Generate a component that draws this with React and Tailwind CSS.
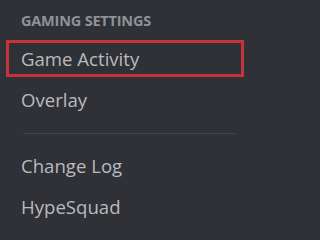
const items = ['Game Activity', 'Overlay']
const more = ['Change Log', 'HypeSquad']

const Item = ({ label, active }) => (
  <div
    className={`h-[37px] mx-[6px] flex items-center pl-[12px] border-[3px] text-[18.6px] text-[#b9bbbe] ${
      active ? 'border-[#c7333d]' : 'border-transparent'
    }`}
  >
    {label}
  </div>
)

export default function App() {
  return (
    <div className="w-full min-h-screen bg-[#2f3136] font-['Open_Sans',sans-serif]">
      <div className="w-[250px] h-[236px] overflow-hidden">
        <div className="pt-[12px] pl-[21px] h-[40px] text-[14.5px] font-bold tracking-[-0.2px] text-[#8e9297] leading-[17px]">
          GAMING SETTINGS
        </div>
        <div className="flex flex-col gap-[4px]">
          {items.map((l, i) => <Item key={l} label={l} active={i === 0} />)}
        </div>
        <div className="mt-[15px] mb-[13px] ml-[23px] mr-[15px] h-px bg-[#42454a]" />
        <div className="flex flex-col gap-[4px]">
          {more.map(l => <Item key={l} label={l} />)}
        </div>
      </div>
    </div>
  )
}
